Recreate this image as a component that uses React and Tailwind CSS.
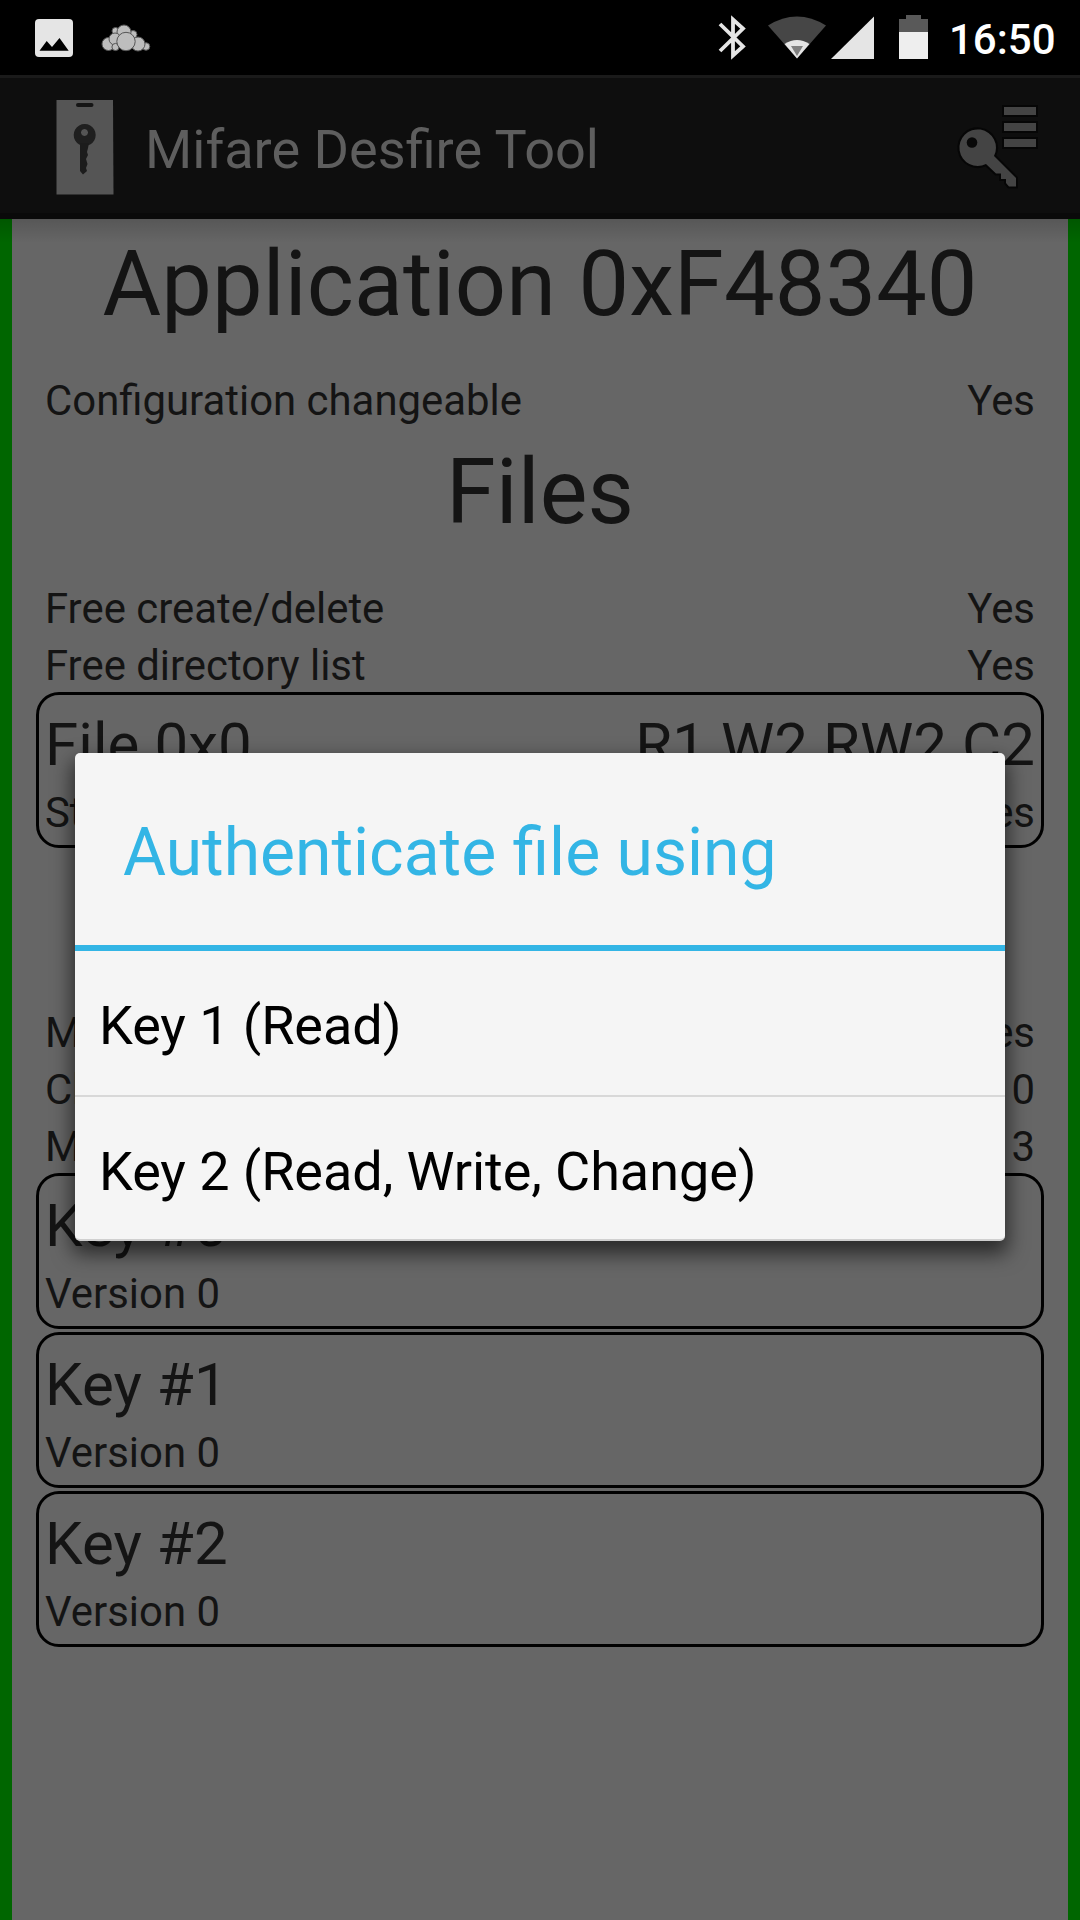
import React from "react";

function Row({ left, right }) {
  return (
    <div className="flex justify-between text-[41.900px] leading-[57px] whitespace-nowrap">
      <span>{left}</span>
      <span>{right}</span>
    </div>
  );
}

function Card({ title, info, left, right }) {
  return (
    <div className="-mx-[9px] h-[156px] rounded-[23px] border-[3px] border-black px-[6px] pt-[12px] mb-[3px]">
      <div className="flex justify-between text-[60px] tracking-[0.070px] leading-[75px] h-[77px] whitespace-nowrap">
        <span>{title}</span>
        <span>{info}</span>
      </div>
      <Row left={left} right={right} />
    </div>
  );
}

function StatusBar() {
  return (
    <div className="h-[75px] bg-black flex items-start justify-between">
      <svg className="w-[170px] h-[75px]" viewBox="0 0 170 75">
        <rect x="35" y="19" width="38" height="38" rx="4" fill="#e5e5e5" />
        <path d="M39.500 50.700 L46.700 41 L52 47 L59.500 38 L68.700 50.700 Z" fill="#000" />
        <g fill="#bdbdbd" stroke="#555" strokeWidth="1">
          <circle cx="115.500" cy="31" r="3.500" />
          <circle cx="133" cy="34.500" r="4" />
          <circle cx="146" cy="46.500" r="3.800" />
          <circle cx="124" cy="32" r="7" />
          <circle cx="108.500" cy="44" r="6.500" />
          <circle cx="115" cy="39" r="6" />
          <circle cx="115.500" cy="47" r="3.600" />
          <circle cx="138" cy="44" r="7" />
          <circle cx="126" cy="41.500" r="9.200" />
        </g>
      </svg>
      <div className="flex">
        <svg className="w-[240px] h-[75px]" viewBox="700 0 240 75">
          <path d="M720 24 L743 46.500 L733 55.500 V19.500 L743 28.500 L720 51" fill="none" stroke="#e5e5e5" strokeWidth="3.800" />
          <path d="M768 25.500 Q797 7.500 826 25.500 L797 58.500 Z" fill="#464646" />
          <path d="M784.500 44 Q797 36 809.500 44 L797 58.500 Z" fill="#e5e5e5" />
          <path d="M791 46 H803 L797 56 Z" fill="#808080" />
          <path d="M831 59 L874 16.500 V59 Z" fill="#e5e5e5" />
          <path d="M899 33 V19 H906 V15 H921 V19 H928 V33 Z" fill="#595959" />
          <path d="M899 32 H928 V59 H899 Z" fill="#eee" />
        </svg>
        <div className="w-[140px] pl-[9px] text-[42px] font-medium leading-[79px] text-white">16:50</div>
      </div>
    </div>
  );
}

function ActionBar() {
  return (
    <div className="h-[144px] bg-[#0e0e0e] border-t-[3px] border-t-[#1a1a1a] border-b-[6px] border-b-[#0a0a0a] flex justify-between">
      <div className="flex">
        <svg className="w-[145px] h-[135px]" viewBox="0 78 145 135">
          <path d="M56.500 100 H113 L113.500 194.500 H56.500 Z" fill="#555" />
          <rect x="76" y="103" width="17.500" height="4" rx="2" fill="#151515" />
          <path fillRule="evenodd" d="M84.700 124 a11 11 0 1 1 -0.010 0 Z M84.500 129 a3.500 3.500 0 1 0 0.010 0 Z" fill="#1f1f1f" />
          <path d="M80 143 H89 L88 148 L87 152 L88 155 L86 159 L87.500 164 L86 168 L87 171 L83 174.500 L80 171 Z" fill="#1c1c1c" />
        </svg>
        <div className="text-[54.100px] leading-[143px] text-[#5e5e5e]">Mifare Desfire Tool</div>
      </div>
      <svg className="w-[130px] h-[135px]" viewBox="950 78 130 135">
        <g fill="#444" stroke="#060606" strokeWidth="4" paintOrder="stroke">
          <rect x="1004" y="107" width="32" height="8" />
          <rect x="1004" y="123" width="32" height="8" />
          <rect x="1004" y="139" width="32" height="8" />
          <path d="M994 156 L1016 178 V186.500 H1009 L1006 183 V179 H1001 V173.500 H996 L986 164 A18.300 18.300 0 1 1 994 156 Z" />
        </g>
        <circle cx="972" cy="142.500" r="5.300" fill="#080808" />
      </svg>
    </div>
  );
}

function Dialog() {
  return (
    <div className="absolute left-[75px] top-[753px] w-[930px] h-[488px] rounded-[5px] bg-[#f5f5f5] border-b-2 border-b-[#d0d0d0] shadow-[0_10px_20px_3px_rgba(0,0,0,0.58)]">
      <div className="h-[198px] border-b-[6px] border-[#33b5e5] pl-[48px] text-[66px] leading-[200px] text-[#33b5e5]">
        Authenticate file using
      </div>
      <div className="h-[146px] border-b-2 border-[#d8d8d8] pl-[24px] text-[54px] tracking-[-0.070px] leading-[150px] text-black">Key 1 (Read)</div>
      <div className="h-[142px] pl-[24px] text-[54px] tracking-[-0.070px] leading-[149px] text-black">Key 2 (Read, Write, Change)</div>
    </div>
  );
}

export default function App() {
  return (
    <div className="relative w-[1080px] h-[1920px] overflow-hidden bg-[#666] text-[#141414] font-['Roboto',sans-serif]">
      <StatusBar />
      <ActionBar />
      <div className="relative h-[1701px] border-x-[12px] border-[#006600] px-[33px]">
        <div className="absolute -inset-x-[12px] top-0 h-[24px] bg-gradient-to-b from-black/15 to-transparent" />
        <h1 className="h-[153px] text-center text-[90px] tracking-[0.150px] leading-[131px]">Application 0xF48340</h1>
        <Row left="Configuration changeable" right="Yes" />
        <h1 className="h-[151px] text-center text-[90px] tracking-[0.100px] leading-[127px]">Files</h1>
        <Row left="Free create/delete" right="Yes" />
        <Row left="Free directory list" right="Yes" />
        <div className="-mt-[2px] h-[312px]">
          <Card title="File 0x0" info="R1 W2 RW2 C2" left="Standard" right="32 bytes" />
        </div>
        <Row left="Master key changeable" right="Yes" />
        <Row left="Change key" right="0" />
        <Row left="Maximum keys" right="3" />
        <div className="-mt-[2px]">
          <Card title="Key #0" left="Version 0" />
          <Card title="Key #1" left="Version 0" />
          <Card title="Key #2" left="Version 0" />
        </div>
      </div>
      <Dialog />
    </div>
  );
}
